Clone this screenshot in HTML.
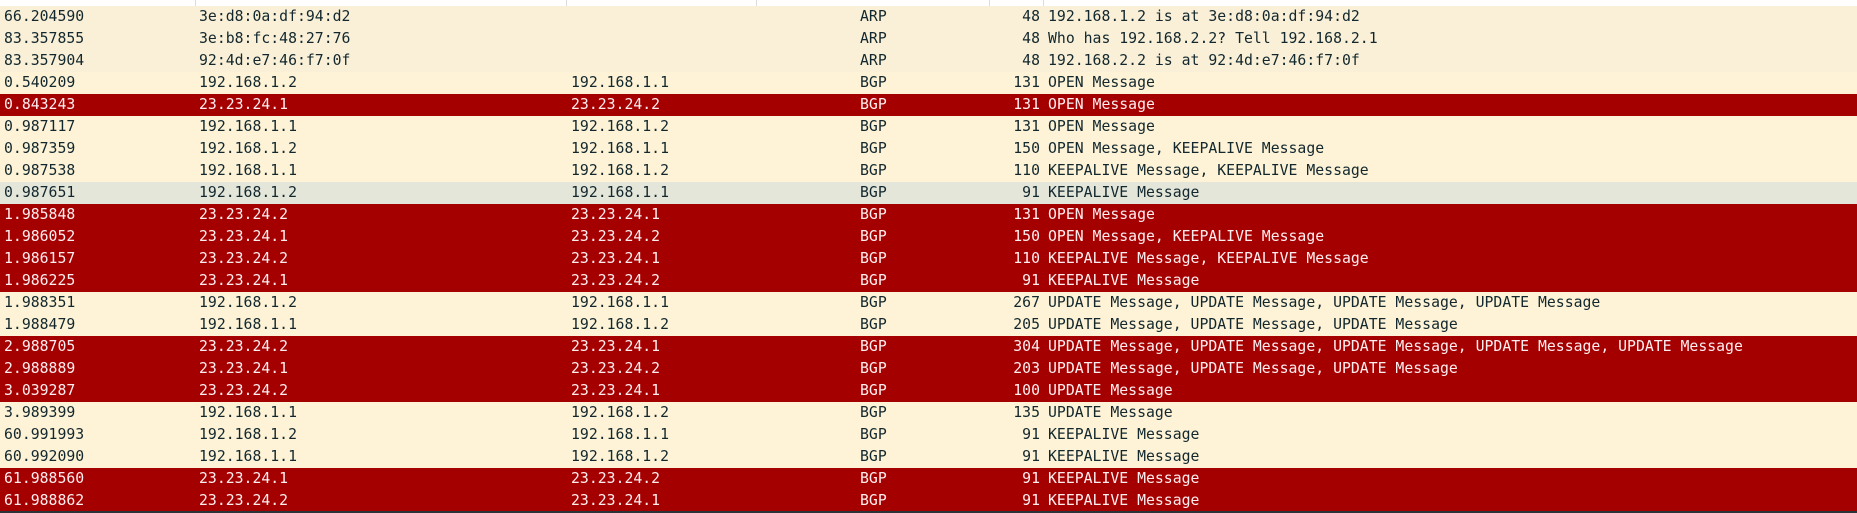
<!DOCTYPE html>
<html><head><meta charset="utf-8"><style>
html,body{margin:0;padding:0;width:1857px;height:513px;overflow:hidden;background:#fff}
.hdr{position:absolute;left:0;top:0;width:1857px;height:6px;background:#fff}
.sep{position:absolute;top:0;width:1px;height:6px;background:#dcdcdc}
.rows{position:absolute;left:0;top:6px;width:1857px}
.r{position:relative;height:22px;font-family:"DejaVu Sans Mono","Liberation Mono",monospace;font-size:14.8px;line-height:22px;color:#12272e;white-space:pre}
.r span{position:absolute;top:0}
.a{background:#faf0d7}.l{background:#fef3d6}.g{background:#e4e6da}.d{background:#a40000;color:#ffeef0}
.c1{left:4px}.c2{left:199px}.c3{left:571px}.c4{left:860px}.c5{right:817px}.c6{left:1048px}
.bot{position:absolute;left:0;top:511px;width:1857px;height:2px;background:#2a3438}
</style></head><body>
<div class="hdr"></div>
<div class="sep" style="left:195px"></div><div class="sep" style="left:566px"></div><div class="sep" style="left:756px"></div><div class="sep" style="left:989px"></div><div class="sep" style="left:1043px"></div>
<div class="rows">
<div class="r a"><span class="c1">66.204590</span><span class="c2">3e:d8:0a:df:94:d2</span><span class="c4">ARP</span><span class="c5">48</span><span class="c6">192.168.1.2 is at 3e:d8:0a:df:94:d2</span></div>
<div class="r a"><span class="c1">83.357855</span><span class="c2">3e:b8:fc:48:27:76</span><span class="c4">ARP</span><span class="c5">48</span><span class="c6">Who has 192.168.2.2? Tell 192.168.2.1</span></div>
<div class="r a"><span class="c1">83.357904</span><span class="c2">92:4d:e7:46:f7:0f</span><span class="c4">ARP</span><span class="c5">48</span><span class="c6">192.168.2.2 is at 92:4d:e7:46:f7:0f</span></div>
<div class="r l"><span class="c1">0.540209</span><span class="c2">192.168.1.2</span><span class="c3">192.168.1.1</span><span class="c4">BGP</span><span class="c5">131</span><span class="c6">OPEN Message</span></div>
<div class="r d"><span class="c1">0.843243</span><span class="c2">23.23.24.1</span><span class="c3">23.23.24.2</span><span class="c4">BGP</span><span class="c5">131</span><span class="c6">OPEN Message</span></div>
<div class="r l"><span class="c1">0.987117</span><span class="c2">192.168.1.1</span><span class="c3">192.168.1.2</span><span class="c4">BGP</span><span class="c5">131</span><span class="c6">OPEN Message</span></div>
<div class="r l"><span class="c1">0.987359</span><span class="c2">192.168.1.2</span><span class="c3">192.168.1.1</span><span class="c4">BGP</span><span class="c5">150</span><span class="c6">OPEN Message, KEEPALIVE Message</span></div>
<div class="r l"><span class="c1">0.987538</span><span class="c2">192.168.1.1</span><span class="c3">192.168.1.2</span><span class="c4">BGP</span><span class="c5">110</span><span class="c6">KEEPALIVE Message, KEEPALIVE Message</span></div>
<div class="r g"><span class="c1">0.987651</span><span class="c2">192.168.1.2</span><span class="c3">192.168.1.1</span><span class="c4">BGP</span><span class="c5">91</span><span class="c6">KEEPALIVE Message</span></div>
<div class="r d"><span class="c1">1.985848</span><span class="c2">23.23.24.2</span><span class="c3">23.23.24.1</span><span class="c4">BGP</span><span class="c5">131</span><span class="c6">OPEN Message</span></div>
<div class="r d"><span class="c1">1.986052</span><span class="c2">23.23.24.1</span><span class="c3">23.23.24.2</span><span class="c4">BGP</span><span class="c5">150</span><span class="c6">OPEN Message, KEEPALIVE Message</span></div>
<div class="r d"><span class="c1">1.986157</span><span class="c2">23.23.24.2</span><span class="c3">23.23.24.1</span><span class="c4">BGP</span><span class="c5">110</span><span class="c6">KEEPALIVE Message, KEEPALIVE Message</span></div>
<div class="r d"><span class="c1">1.986225</span><span class="c2">23.23.24.1</span><span class="c3">23.23.24.2</span><span class="c4">BGP</span><span class="c5">91</span><span class="c6">KEEPALIVE Message</span></div>
<div class="r l"><span class="c1">1.988351</span><span class="c2">192.168.1.2</span><span class="c3">192.168.1.1</span><span class="c4">BGP</span><span class="c5">267</span><span class="c6">UPDATE Message, UPDATE Message, UPDATE Message, UPDATE Message</span></div>
<div class="r l"><span class="c1">1.988479</span><span class="c2">192.168.1.1</span><span class="c3">192.168.1.2</span><span class="c4">BGP</span><span class="c5">205</span><span class="c6">UPDATE Message, UPDATE Message, UPDATE Message</span></div>
<div class="r d"><span class="c1">2.988705</span><span class="c2">23.23.24.2</span><span class="c3">23.23.24.1</span><span class="c4">BGP</span><span class="c5">304</span><span class="c6">UPDATE Message, UPDATE Message, UPDATE Message, UPDATE Message, UPDATE Message</span></div>
<div class="r d"><span class="c1">2.988889</span><span class="c2">23.23.24.1</span><span class="c3">23.23.24.2</span><span class="c4">BGP</span><span class="c5">203</span><span class="c6">UPDATE Message, UPDATE Message, UPDATE Message</span></div>
<div class="r d"><span class="c1">3.039287</span><span class="c2">23.23.24.2</span><span class="c3">23.23.24.1</span><span class="c4">BGP</span><span class="c5">100</span><span class="c6">UPDATE Message</span></div>
<div class="r l"><span class="c1">3.989399</span><span class="c2">192.168.1.1</span><span class="c3">192.168.1.2</span><span class="c4">BGP</span><span class="c5">135</span><span class="c6">UPDATE Message</span></div>
<div class="r l"><span class="c1">60.991993</span><span class="c2">192.168.1.2</span><span class="c3">192.168.1.1</span><span class="c4">BGP</span><span class="c5">91</span><span class="c6">KEEPALIVE Message</span></div>
<div class="r l"><span class="c1">60.992090</span><span class="c2">192.168.1.1</span><span class="c3">192.168.1.2</span><span class="c4">BGP</span><span class="c5">91</span><span class="c6">KEEPALIVE Message</span></div>
<div class="r d"><span class="c1">61.988560</span><span class="c2">23.23.24.1</span><span class="c3">23.23.24.2</span><span class="c4">BGP</span><span class="c5">91</span><span class="c6">KEEPALIVE Message</span></div>
<div class="r d"><span class="c1">61.988862</span><span class="c2">23.23.24.2</span><span class="c3">23.23.24.1</span><span class="c4">BGP</span><span class="c5">91</span><span class="c6">KEEPALIVE Message</span></div>
</div>
<div class="bot"></div>
</body></html>
